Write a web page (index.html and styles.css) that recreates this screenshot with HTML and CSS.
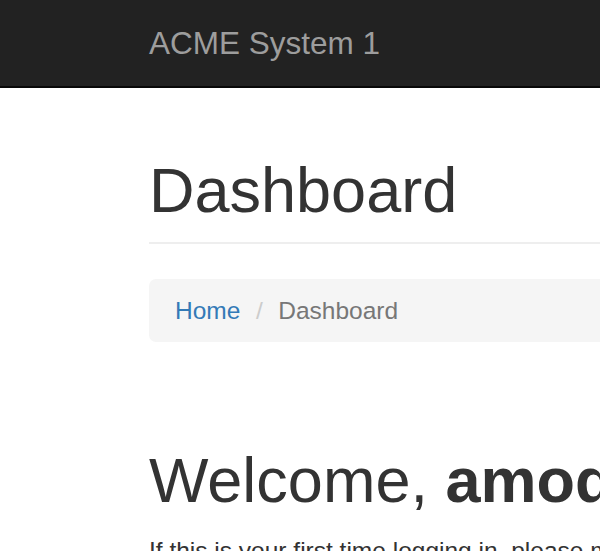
FILE: index.html
```html
<!DOCTYPE html>
<html lang="en">
<head>
<meta charset="utf-8">
<title>Dashboard - ACME System 1</title>
<link rel="stylesheet" href="styles.css">
</head>
<body>
<nav class="navbar">
  <div class="container">
    <a class="brand" href="#">ACME System 1</a>
  </div>
</nav>
<main class="container">
  <div class="page-header">
    <h1>Dashboard</h1>
  </div>
  <ol class="breadcrumb">
    <li><a href="#">Home</a></li>
    <li class="active">Dashboard</li>
  </ol>
  <section class="welcome">
    <h1>Welcome, <strong>amodeo</strong>!</h1>
    <p>If this is your first time logging in, please make sure to change your password.</p>
  </section>
</main>
</body>
</html>
```
FILE: styles.css
```css
html, body {
  margin: 0;
  padding: 0;
  overflow: hidden;
}
body {
  font-family: "Liberation Sans", Arial, Helvetica, sans-serif;
  font-size: 24.5px;
  line-height: 35px;
  color: #333;
  background: #fff;
  width: 1200px;
}
.container {
  padding-left: 149px;
  padding-right: 26px;
}
.navbar {
  background: #222;
  height: 86px;
  border-bottom: 2px solid #080808;
}
.brand {
  display: inline-block;
  padding-top: 26px;
  font-size: 31.5px;
  line-height: 35px;
  color: #9d9d9d;
  text-decoration: none;
}
h1 {
  font-size: 63px;
  font-weight: 500;
  line-height: 69.3px;
  margin: 0;
}
h1 strong {
  font-weight: 700;
}
.page-header {
  margin-top: 68px;
  padding-bottom: 17px;
  border-bottom: 2px solid #eee;
}
.breadcrumb {
  list-style: none;
  margin: 35px 0 0;
  padding: 14px 26px;
  background: #f5f5f5;
  border-radius: 7px;
}
.breadcrumb li {
  display: inline-block;
}
.breadcrumb li + li::before {
  content: "/\00a0";
  padding: 0 8.75px;
  color: #ccc;
}
.breadcrumb a {
  color: #337ab7;
  text-decoration: none;
}
.breadcrumb .active {
  color: #777;
}
.welcome {
  margin-top: 104px;
}
.welcome p {
  margin: 17.5px 0 0;
  white-space: nowrap;
}
```
